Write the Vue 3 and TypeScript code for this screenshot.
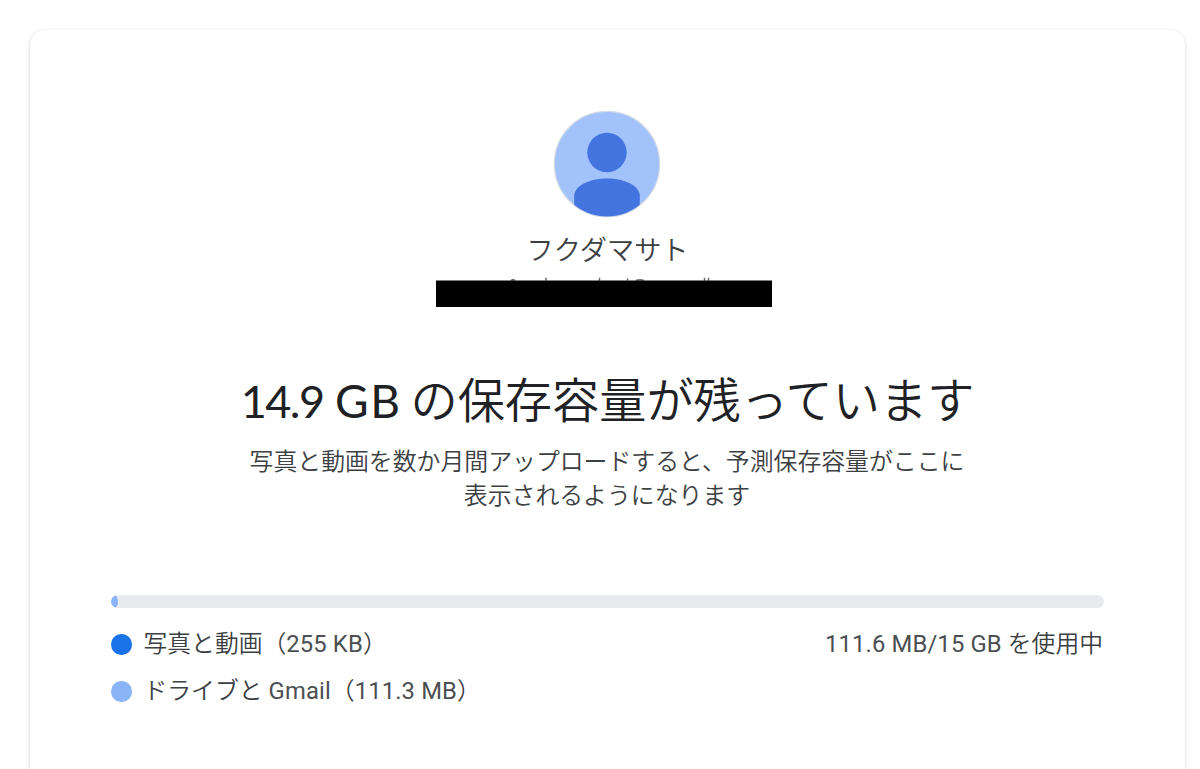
<script setup lang="ts">
interface TextRun { text: string; latin?: boolean }
interface UsageItem { runs: TextRun[]; kind: string }
const items: UsageItem[] = [
  { runs: [{ text: '写真と動画（' }, { text: '255 KB', latin: true }, { text: '）' }], kind: 'photos' },
  { runs: [{ text: 'ドライブと' }, { text: ' Gmail', latin: true }, { text: '（' }, { text: '111.3 MB', latin: true }, { text: '）' }], kind: 'drive' },
]
</script>

<template>
  <main class="page">
    <section class="card">
      <svg class="avatar" viewBox="0 0 108 108" aria-hidden="true">
        <defs><clipPath id="disc"><circle cx="54" cy="54" r="52.5" /></clipPath></defs>
        <circle cx="54" cy="54" r="52.7" fill="#a1c2fa" stroke="#d5dbe4" stroke-width="1.2" />
        <g clip-path="url(#disc)" fill="#4374e0">
          <circle cx="54" cy="42.5" r="19.7" />
          <path d="M21.2 110V86C21.2 76 36 68.500 54 68.500S86.800 76 86.800 86V110Z" />
        </g>
      </svg>
      <div class="name"><span>フクダマサト</span></div>
      <div class="mask">
        <svg viewBox="0 0 336 30" aria-hidden="true">
          <path d="M75 3.500 77 2.500 79 3.500M110 .8v3M163.500.8v3M192 1.500l-1 2M200 3.500Q204 2 208 3.500M268.500.8v3M272.500.8v3" fill="none" stroke="#6a6d70" stroke-width="1.5" />
          <path d="M0 3.500H336V30H0Z" fill="#000" />
        </svg>
      </div>
      <h1><span class="amount">14.9 <span class="unit">GB</span></span><span>の保存容量が残っています</span></h1>
      <p><span>写真と動画を数か月間アップロードすると、予測保存容量がここに</span><br><span>表示されるようになります</span></p>
      <div class="bar"><i></i></div>
      <div class="details">
        <ul>
          <li v-for="item in items" :key="item.kind">
            <i :class="item.kind"></i>
            <span class="label"><span v-for="run in item.runs" :key="run.text" :class="{ latin: run.latin }">{{ run.text }}</span></span>
          </li>
        </ul>
        <span class="total"><span class="latin">111.6 MB/15 GB </span>を使用中</span>
      </div>
    </section>
  </main>
</template>

<style>
body { background: #fff; }
</style>
<style scoped>
.page { height: 769px; overflow: hidden; box-sizing: border-box; padding: 30px 15px 0 30px; background: #fff; font-family: Roboto, "Noto Sans CJK JP", sans-serif; color: #3c4043; }
.card { box-sizing: border-box; height: 800px; border-radius: 15px; padding: 80px 81px 0; display: flex; flex-direction: column; align-items: center; background: #fff; box-shadow: 0 1px 3px 1px #dfe2e4; }
.avatar { width: 108px; height: 108px; flex: none; margin-right: 1px; }
.name { height: 59px; line-height: 66px; font-size: 27.2px; font-weight: 350; white-space: nowrap; }
.mask { width: 336px; height: 31px; margin-right: 7px; }
.mask svg { display: block; width: 336px; height: 30px; }
h1 { display: flex; align-items: baseline; margin: 57px 0 0; height: 69px; line-height: 66px; font-family: "Noto Sans CJK JP", sans-serif; font-size: 47.2px; font-weight: 350; color: #202124; white-space: nowrap; }
.amount { font-family: Lato, sans-serif; font-size: 45px; font-weight: 400; letter-spacing: -1.500px; word-spacing: 1.500px; margin-right: 9px; }
.unit { font-size: 46px; letter-spacing: 1.500px; }
p { margin: 12px 1px 0 0; font-size: 23.87px; font-weight: 350; line-height: 33.5px; text-align: center; white-space: nowrap; }
.bar { width: 100%; height: 13px; margin-top: 82px; border-radius: 7px; background: #e8eaed; overflow: hidden; flex: none; }
.bar i { display: block; width: 7px; height: 13px; border-radius: 50%; background: #8ab4f8; }
.details { width: 100%; display: flex; justify-content: space-between; margin-top: 13px; font-size: 23.8px; line-height: 47px; white-space: nowrap; font-weight: 350; }
ul { margin: 0; padding: 0; list-style: none; }
li { display: flex; align-items: center; height: 47px; }
li i { width: 20.5px; height: 20.5px; border-radius: 50%; margin-right: 12px; }
.label { white-space: pre; line-height: 46px; height: 47px; }
.latin { font-weight: 400; color: #4b4f52; letter-spacing: .14px; }
.total { padding-right: 1px; line-height: 46px; }
.photos { background: #1a73e8; }
.drive { background: #8ab4f8; }
</style>
